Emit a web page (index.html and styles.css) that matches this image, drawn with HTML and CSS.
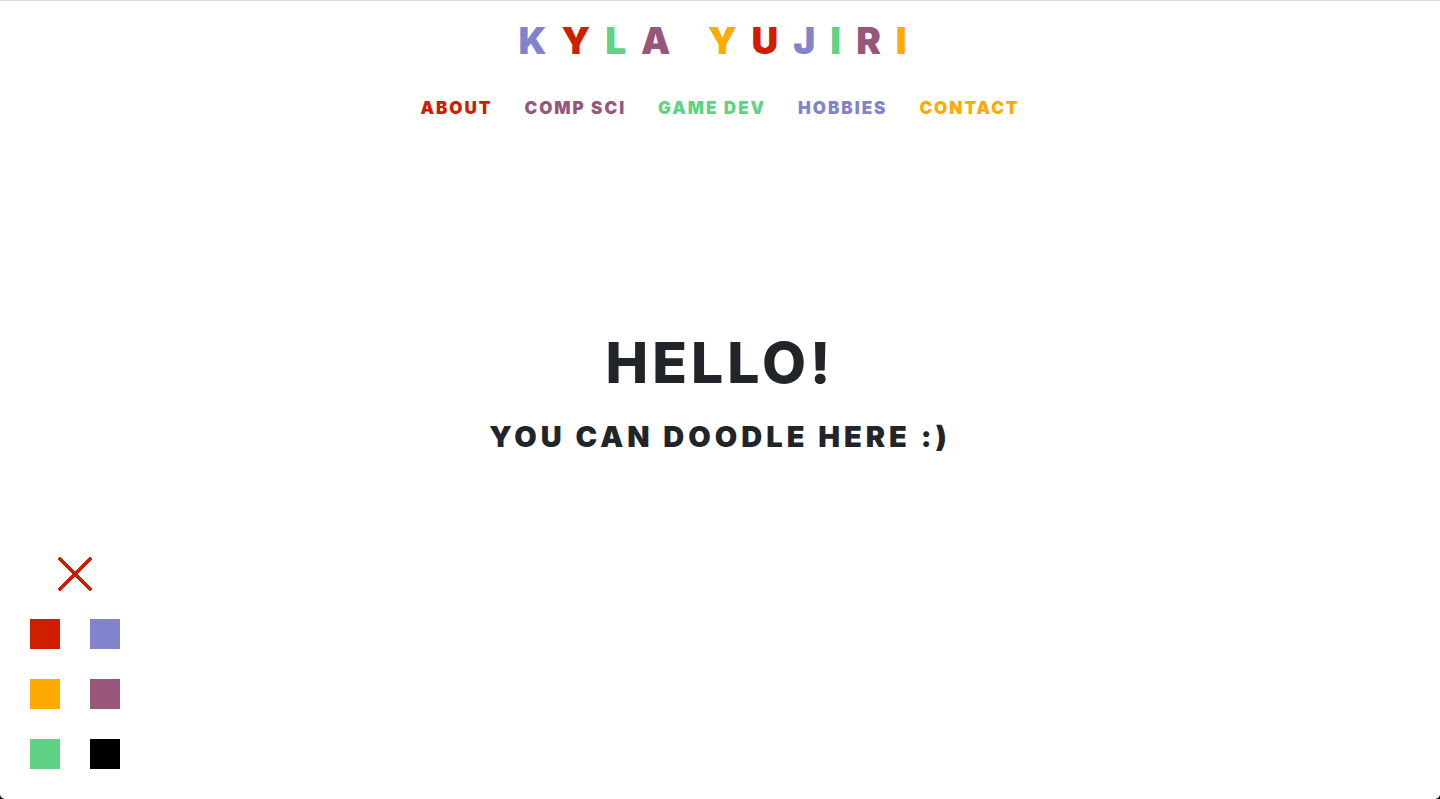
FILE: index.html
```html
<!DOCTYPE html>
<html lang="en">
<head>
<meta charset="utf-8">
<meta name="viewport" content="width=device-width, initial-scale=1">
<title>Kyla Yujiri</title>
<link rel="stylesheet" href="styles.css">
</head>
<body>
<div class="page">
  <header class="header">
    <h1 class="name"><span class="blue">K</span><span class="red">Y</span><span class="green">L</span><span class="plum">A</span> <span class="orange">Y</span><span class="red">U</span><span class="blue">J</span><span class="green">I</span><span class="plum">R</span><span class="orange">I</span></h1>
    <nav class="nav">
      <a class="red" href="#about">ABOUT</a>
      <a class="plum" href="#comp-sci">COMP SCI</a>
      <a class="green" href="#game-dev">GAME DEV</a>
      <a class="blue" href="#hobbies">HOBBIES</a>
      <a class="orange" href="#contact">CONTACT</a>
    </nav>
  </header>
  <main class="hero">
    <h2 class="hello">HELLO!</h2>
    <p class="doodle">YOU CAN DOODLE HERE :)</p>
  </main>
  <div class="palette">
    <button class="clear red" type="button" aria-label="Clear drawing">
      <svg viewBox="0 0 36 36" width="36" height="36" fill="none" stroke="currentColor" stroke-width="4" stroke-linecap="round" shape-rendering="crispEdges"><path d="M3 3 33 33M33 3 3 33"/></svg>
    </button>
    <button class="swatch red" type="button" aria-label="Red"></button>
    <button class="swatch blue" type="button" aria-label="Blue"></button>
    <button class="swatch orange" type="button" aria-label="Orange"></button>
    <button class="swatch plum" type="button" aria-label="Plum"></button>
    <button class="swatch green" type="button" aria-label="Green"></button>
    <button class="swatch black" type="button" aria-label="Black"></button>
  </div>
</div>
</body>
</html>
```

FILE: styles.css
```css
* { box-sizing: border-box; }

html { background: #000; }

body {
  margin: 0;
  color: #212529;
  font-family: Inter, "Liberation Sans", sans-serif;
}

.page {
  position: relative;
  display: flex;
  flex-direction: column;
  min-height: 100vh;
  border-top: 1px solid #dadade;
  border-radius: 0 0 5px 5px;
  background: #fff;
}

.red { color: #cf1d00; }
.blue { color: #8184cc; }
.green { color: #5fd284; }
.plum { color: #98567b; }
.orange { color: #ffaa00; }
.black { color: #000; }

.header {
  display: flex;
  flex-direction: column;
  align-items: center;
  gap: 32px;
  padding-top: 20px;
}

.name {
  margin: 0;
  font-size: 37px;
  font-weight: 900;
  line-height: 40px;
  letter-spacing: 15px;
}

.nav {
  display: flex;
  flex-wrap: wrap;
  justify-content: center;
  gap: 32px;
}

.nav a {
  font-size: 17px;
  font-weight: 900;
  line-height: 30px;
  letter-spacing: 2px;
  text-decoration: none;
}

.hero {
  display: flex;
  flex: 1;
  flex-direction: column;
  align-items: center;
  justify-content: center;
  gap: 24px;
  padding-bottom: 136px;
  text-align: center;
}

.hello {
  margin: 0;
  font-size: 57px;
  font-weight: 800;
  line-height: 64px;
  letter-spacing: 4px;
}

.doodle {
  margin: 0;
  font-size: 29px;
  font-weight: 900;
  line-height: 36px;
  letter-spacing: 4px;
}

.palette {
  position: absolute;
  bottom: 30px;
  left: 30px;
  display: grid;
  grid-template-columns: 30px 30px;
  gap: 30px;
}

.palette button {
  padding: 0;
  border: 0;
  cursor: pointer;
}

.clear {
  display: flex;
  grid-column: 1 / -1;
  align-items: center;
  justify-content: center;
  height: 30px;
  background: none;
}

.clear svg {
  flex: none;
}

.swatch {
  height: 30px;
  background: currentColor;
}
```
